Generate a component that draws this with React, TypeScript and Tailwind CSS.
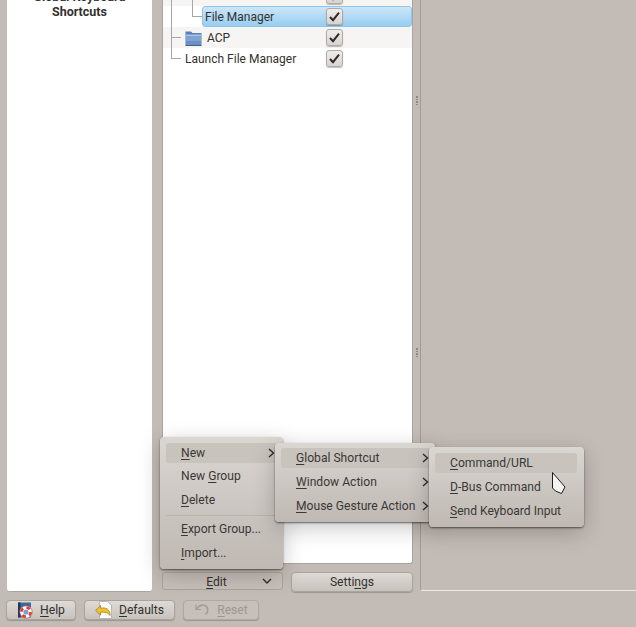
import React from "react";

const font = { fontFamily: 'Roboto, "Noto Sans", sans-serif' };

function Check() {
  return (
    <span className="flex h-[17px] w-[17px] items-center justify-center rounded-[3px] border border-[#b0aaa5] bg-gradient-to-b from-[#efecea] to-[#d8d4cf] shadow-[0_1px_1px_rgba(0,0,0,0.25)]">
      <svg width="13" height="11" viewBox="0 0 13 11">
        <path d="M2 6 L5 9.2 L11 1.6" fill="none" stroke="#2b2b2b" strokeWidth="2" />
      </svg>
    </span>
  );
}

function Folder() {
  return (
    <svg width="17" height="16" viewBox="0 0 17 16">
      <path d="M0.5 1.5 H6 L7.5 3 H16.5 V15.5 H0.5 Z" fill="#5a80b8" />
      <path d="M1 4.5 H16 V7 H1 Z" fill="#a9c3e4" />
      <path d="M1 6 H16 V15 H1 Z" fill="#7fa3d2" />
      <path d="M1 11 H16 V15 H1 Z" fill="#6a90c4" />
      <path d="M0.5 15.5 H16.5" stroke="#3f6192" />
    </svg>
  );
}

function Help() {
  return (
    <svg width="17" height="17" viewBox="0 0 17 17">
      <rect x="1" y="0.5" width="13" height="15" fill="#3d6a9c" />
      <rect x="1" y="0.5" width="2.5" height="15" fill="#20395c" />
      <circle cx="9" cy="10" r="6.2" fill="#fff" stroke="#c9352a" strokeWidth="0.6" />
      <circle cx="9" cy="10" r="4.6" fill="none" stroke="#d83a2d" strokeWidth="2.6" strokeDasharray="3.6 3.6" />
      <circle cx="9" cy="10" r="2.6" fill="#7fa0c8" />
    </svg>
  );
}

function Defaults() {
  return (
    <svg width="18" height="18" viewBox="0 0 18 18">
      <path d="M4.5 0.5 H12.5 L16.5 4 V17.5 H4.5 Z" fill="#fbfbfa" stroke="#b8b6b2" />
      <path d="M0.7 9.5 L5.5 4.5 V7.2 C11 6 15.5 8.5 15 14.5 C13.5 11.5 10 10.8 5.5 11.2 V14.2 Z" fill="#efc12e" stroke="#a67f10" strokeWidth="0.8" />
    </svg>
  );
}

function ResetIcon() {
  return (
    <svg width="17" height="14" viewBox="0 0 17 14">
      <path d="M2 1.5 V6.5 H7" fill="none" stroke="#a39d98" strokeWidth="1.2" />
      <path d="M2.5 6 C5 2.5 8 1.5 11 2.5 C14.5 4 14.5 9 11.5 11.5" fill="none" stroke="#a39d98" strokeWidth="1.6" />
    </svg>
  );
}

function Arrow() {
  return (
    <svg width="7" height="10" viewBox="0 0 7 10" className="shrink-0">
      <path d="M1 1 L5.5 5 L1 9" fill="none" stroke="#2e2e2e" strokeWidth="1.4" />
    </svg>
  );
}

type Item = { pre?: string; u: string; post: string; sub?: boolean };

function Row({ it, active, px, w }: { it: Item; active?: boolean; px: string; w: string }) {
  return (
    <div
      className={
        "flex h-[20px] items-center justify-between rounded-[3px] text-[12.1px] text-[#3a3835] " +
        px + " " + w + " " +
        (active ? "bg-[#c9c3be]" : "")
      }
    >
      <span className="whitespace-nowrap">
        {it.pre}
        <u className="underline-offset-2">{it.u}</u>
        {it.post}
      </span>
      {it.sub && <Arrow />}
    </div>
  );
}

const shell =
  "absolute rounded-[4px] bg-gradient-to-b from-[#dad6d2] to-[#bfb8b3] shadow-[0_1px_2px_rgba(0,0,0,0.55),0_6px_22px_rgba(0,0,0,0.22)] flex flex-col";

function Splitter() {
  return (
    <div className="flex flex-col gap-[1px]">
      {[0, 1, 2, 3].map((i) => (
        <span key={i} className="h-[1.5px] w-[2px] bg-[#8f8984]" />
      ))}
    </div>
  );
}

function Btn({ w, dis, children }: { w: string; dis?: boolean; children: React.ReactNode }) {
  return (
    <div
      className={
        "flex h-[20px] items-center justify-center gap-[6px] rounded-[4px] border text-[12.1px] shadow-[0_1px_1px_rgba(0,0,0,0.2)] " +
        w + " " +
        (dis
          ? "border-[#afa9a4] bg-[#c6bfba] text-[#9d9792]"
          : "border-[#aaa49f] bg-gradient-to-b from-[#dedad6] to-[#c8c2bd] text-[#33312e]")
      }
    >
      {children}
    </div>
  );
}

const rowBase = "relative flex h-[21px] items-center";

export default function App() {
  return (
    <div style={font} className="relative flex h-[627px] w-[636px] flex-col overflow-hidden bg-[#c3bbb6] text-[#2f2d2b]">
      <div className="flex h-[592px] pl-[7px]">
        <div className="h-[592px] w-[145px] overflow-hidden rounded-b-[3px] border-b border-[#aaa49f] bg-white">
          <div className="mt-[-11px] text-center text-[12.5px] font-bold leading-[15px] text-[#33312e]">
            <div>Global Keyboard</div>
            <div>Shortcuts</div>
          </div>
        </div>
        <div className="ml-[10px] flex w-[251px] flex-col">
          <div className="h-[564px] overflow-hidden rounded-b-[3px] border-x border-b border-[#aaa49f] bg-white text-[12px] text-[#33312e]">
            <div className={rowBase + " mt-[-15px] bg-[#f6f5f3]"}>
              <span className="absolute left-[8px] top-0 h-[21px] w-px bg-[#aaa6a2]" />
              <span className="absolute left-[29px] top-0 h-[21px] w-px bg-[#aaa6a2]" />
              <span className="absolute left-[163px] top-[2px]"><Check /></span>
            </div>
            <div className={rowBase}>
              <span className="absolute left-[8px] top-0 h-[21px] w-px bg-[#aaa6a2]" />
              <span className="absolute left-[29px] top-0 h-[11px] w-[10px] border-b border-l border-[#aaa6a2]" />
              <div className="ml-[39px] flex h-[21px] flex-1 items-center rounded-[3px] border border-[#8fc6ec] bg-gradient-to-b from-[#cde6f8] to-[#97cdf0] pl-[2px]">
                <span>File Manager</span>
                <span className="absolute left-[163px] top-[2px]"><Check /></span>
              </div>
            </div>
            <div className={rowBase + " bg-[#f6f5f3]"}>
              <span className="absolute left-[8px] top-0 h-[21px] w-px bg-[#aaa6a2]" />
              <span className="absolute left-[8px] top-[10px] h-px w-[10px] bg-[#aaa6a2]" />
              <span className="ml-[22px] mr-[5px] flex"><Folder /></span>
              <span>ACP</span>
              <span className="absolute left-[163px] top-[2px]"><Check /></span>
            </div>
            <div className={rowBase}>
              <span className="absolute left-[8px] top-0 h-[11px] w-[10px] border-b border-l border-[#aaa6a2]" />
              <span className="ml-[22px]">Launch File Manager</span>
              <span className="absolute left-[163px] top-[2px]"><Check /></span>
            </div>
          </div>
          <div className="mt-[8px] flex gap-[8px]">
            <div className="flex h-[18px] w-[121px] items-center rounded-[3px] border border-[#aaa49f] bg-[#c6bfba] text-[12.1px] text-[#33312e]">
              <span className="flex-1 pl-[8px] pt-[2px] text-center"><u className="underline-offset-2">E</u>dit</span>
              <svg width="10" height="7" viewBox="0 0 10 7" className="mr-[10px]">
                <path d="M1 1 L5 5 L9 1" fill="none" stroke="#2e2e2e" strokeWidth="1.4" />
              </svg>
            </div>
            <Btn w="w-[122px]">
              <span>Setti<u className="underline-offset-2">n</u>gs</span>
            </Btn>
          </div>
        </div>
        <div className="flex w-[7px] flex-col items-center">
          <div className="mt-[96px]"><Splitter /></div>
          <div className="mt-[243px]"><Splitter /></div>
        </div>
        <div className="h-[591px] flex-1 rounded-bl-[3px] border-b border-l border-b-[#efedeb] border-l-[#a19b96]" />
      </div>
      <div className="mt-[8px] flex gap-[8px] pl-[6px]">
        <Btn w="w-[70px]">
          <Help />
          <span><u className="underline-offset-2">H</u>elp</span>
        </Btn>
        <Btn w="w-[91px]">
          <Defaults />
          <span><u className="underline-offset-2">D</u>efaults</span>
        </Btn>
        <Btn w="w-[76px]" dis>
          <ResetIcon />
          <span><u className="underline-offset-2">R</u>eset</span>
        </Btn>
      </div>

      <div className={shell + " left-[160px] top-[437px] h-[132px] w-[123px] p-[6px]"}>
        <Row it={{ u: "N", post: "ew", sub: true }} active px="pl-[15px] pr-[2px]" w="w-[111px]" />
        <div className="mt-[4px]"><Row it={{ pre: "New ", u: "G", post: "roup" }} px="pl-[15px]" w="w-[111px]" /></div>
        <div className="mt-[4px]"><Row it={{ u: "D", post: "elete" }} px="pl-[15px]" w="w-[111px]" /></div>
        <div className="my-[4px] h-px bg-[#b3ada8] opacity-70" />
        <Row it={{ u: "E", post: "xport Group..." }} px="pl-[15px]" w="w-[111px]" />
        <div className="mt-[4px]"><Row it={{ u: "I", post: "mport..." }} px="pl-[15px]" w="w-[111px]" /></div>
      </div>

      <div className={shell + " left-[275px] top-[443px] h-[79px] w-[160px] gap-[4px] p-[5px] pl-[6px]"}>
        <Row it={{ u: "G", post: "lobal Shortcut", sub: true }} active px="pl-[15px] pr-[2px]" w="w-[150px]" />
        <Row it={{ u: "W", post: "indow Action", sub: true }} px="pl-[15px] pr-[2px]" w="w-[150px]" />
        <Row it={{ u: "M", post: "ouse Gesture Action", sub: true }} px="pl-[15px] pr-[2px]" w="w-[150px]" />
      </div>

      <div className={shell + " left-[429px] top-[447px] h-[80px] w-[155px] gap-[4px] p-[6px]"}>
        <Row it={{ u: "C", post: "ommand/URL" }} active px="pl-[15px]" w="w-[142px]" />
        <Row it={{ u: "D", post: "-Bus Command" }} px="pl-[15px]" w="w-[142px]" />
        <Row it={{ u: "S", post: "end Keyboard Input" }} px="pl-[15px]" w="w-[142px]" />
      </div>

      <svg width="15" height="23" viewBox="0 0 15 23" className="absolute left-[552px] top-[472px]">
        <path d="M0.5 0.5 L13 15 L9.5 21.5 L3.5 19 L0.5 16 Z" fill="#f4f3f1" stroke="#1d1d1d" strokeWidth="1" strokeLinejoin="round" />
      </svg>
    </div>
  );
}
